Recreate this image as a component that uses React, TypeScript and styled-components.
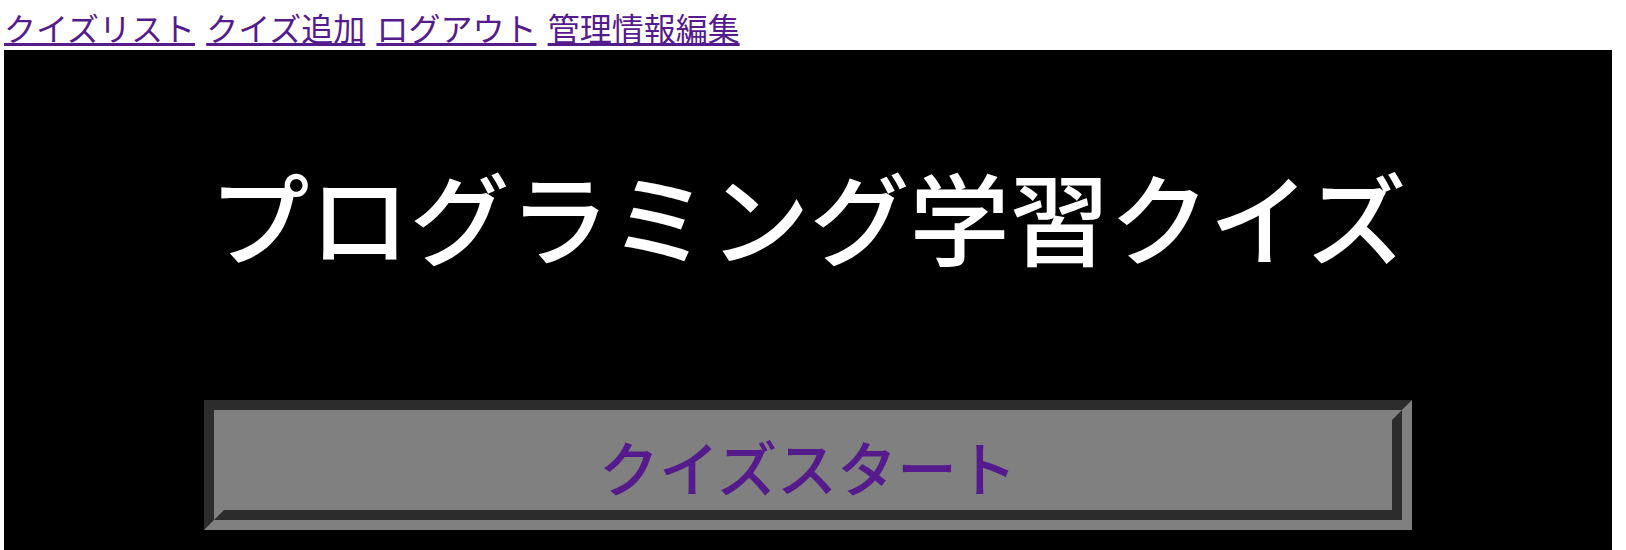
import React from "react";
import styled, {createGlobalStyle} from "styled-components";

const GlobalStyle = createGlobalStyle`
          body {
            margin: 4px;
            background: #ffffff;
            font-family: "Noto Sans CJK JP", "Noto Sans", sans-serif;
          }
        `;

const Nav = styled.nav`
          font-size: 32px;
          line-height: 46px;
          white-space: nowrap;
          word-spacing: 4px;

          & a {
            color: #551a8b;
            text-decoration: underline;
          }
        `;

const Stage = styled.main`
          width: 1608px;
          background: #000000;
          display: flex;
          flex-flow: column;
          align-items: center;
          padding: 92px 0 60px;
        `;

const Title = styled.h1`
          margin: 0;
          color: #ffffff;
          font-size: 100px;
          font-weight: 500;
          line-height: 145px;
          text-align: center;
        `;

const StartButton = styled.div`
          margin-top: 113px;
          width: 1168px;
          height: 90px;
          background: #808080;
          border: 20px groove #808080;
          display: flex;
          align-items: center;
          justify-content: center;
          font-size: 60px;
          font-weight: 500;
          line-height: 87px;

          & a {
            color: #551a8b;
            text-decoration: none;
          }
        `;

const links = ['クイズリスト', 'クイズ追加', 'ログアウト', '管理情報編集'];

export default function App() {
    return <>
        <GlobalStyle/>
        <Nav>
            {links.map((label, i) => <React.Fragment key={label}>
                {i > 0 && ' '}
                <a href="#">{label}</a>
            </React.Fragment>)}
        </Nav>
        <Stage>
            <Title>プログラミング学習クイズ</Title>
            <StartButton>
                <a href="#">クイズスタート</a>
            </StartButton>
        </Stage>
    </>
}
